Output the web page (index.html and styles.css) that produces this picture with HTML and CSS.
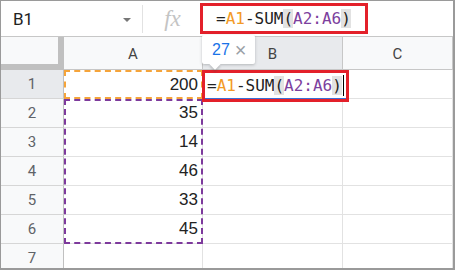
FILE: index.html
```html
<!DOCTYPE html>
<html lang="en">
<head>
  <meta charset="UTF-8">
  <meta name="viewport" content="width=device-width, initial-scale=1.0">
  <title>Sheet formula</title>
  <link rel="stylesheet" href="styles.css">
</head>
<body>
  <div class="sheet">
    <!-- Formula bar -->
    <div class="formula-bar">
      <div class="namebox">
        <span>B1</span>
        <span class="dropdown"></span>
      </div>
      <div class="sep"></div>
      <div class="fx">fx</div>
      <div class="formula-box">
        <span class="eq">=</span><span class="r1">A1</span><span class="fn">-SUM</span><span class="paren">(</span><span class="r2">A2:A6</span><span class="paren">)</span>
      </div>
    </div>

    <!-- Grid -->
    <div class="grid">
      <div class="corner"></div>
      <div class="col-head">A</div>
      <div class="col-head active">B</div>
      <div class="col-head">C</div>

      <div class="row-head active">1</div>
      <div class="cell ref-orange">200</div>
      <div class="cell anchor">
        <!-- Result preview tooltip -->
        <div class="preview">
          <span class="preview-value">27</span>
          <span class="preview-close">&times;</span>
        </div>
        <!-- Cell editor in B1 -->
        <div class="editor">
          <div class="editor-inner">
            <span class="eq">=</span><span class="r1">A1</span><span class="fn">-SUM</span><span class="paren">(</span><span class="r2">A2:A6</span><span class="paren">)</span><span class="caret"></span>
          </div>
        </div>
      </div>
      <div class="cell"></div>

      <div class="row-head">2</div>
      <div class="cell anchor">35<div class="ref-purple"></div></div>
      <div class="cell"></div>
      <div class="cell"></div>

      <div class="row-head">3</div>
      <div class="cell">14</div>
      <div class="cell"></div>
      <div class="cell"></div>

      <div class="row-head">4</div>
      <div class="cell">46</div>
      <div class="cell"></div>
      <div class="cell"></div>

      <div class="row-head">5</div>
      <div class="cell">33</div>
      <div class="cell"></div>
      <div class="cell"></div>

      <div class="row-head">6</div>
      <div class="cell">45</div>
      <div class="cell"></div>
      <div class="cell"></div>

      <div class="row-head">7</div>
      <div class="cell"></div>
      <div class="cell"></div>
      <div class="cell"></div>
    </div>
  </div>
</body>
</html>
```

FILE: styles.css
```css
/* Page */
body {
  margin: 0;
  font-family: Roboto, "Liberation Sans", Arial, sans-serif;
  background: #fff;
}

.sheet {
  width: 455px;
  height: 270px;
  box-sizing: border-box;
  border: 1px solid #9a9a9a;
  border-right-width: 2px;
  border-bottom-width: 2px;
  overflow: hidden;
}

/* Formula bar */
.formula-bar {
  height: 36px;
  box-sizing: border-box;
  border-bottom: 1px solid #c7c7c7;
  display: flex;
  align-items: center;
}

.namebox {
  flex: 0 0 141px;
  box-sizing: border-box;
  padding: 0 11px 0 12px;
  display: flex;
  align-items: center;
  justify-content: space-between;
  font-size: 17px;
  color: #222;
}

.dropdown {
  width: 0;
  height: 0;
  border-left: 4px solid transparent;
  border-right: 4px solid transparent;
  border-top: 4px solid #777;
  margin-top: 2px;
}

.sep {
  width: 1px;
  height: 28px;
  background: #e2e2e2;
}

.fx {
  flex: 0 0 57px;
  text-align: center;
  font-family: "Liberation Serif", serif;
  font-style: italic;
  font-size: 23px;
  color: #c4c4c4;
  padding-left: 2px;
  box-sizing: border-box;
}

.formula-box {
  width: 168px;
  height: 31px;
  box-sizing: border-box;
  border: 3px solid #e3202a;
  padding-left: 13px;
  display: flex;
  align-items: center;
  font-family: "DejaVu Sans Mono", "Liberation Mono", monospace;
  font-size: 16px;
  margin-top: -1px;
}

/* Formula tokens */
.eq,
.fn {
  color: #222;
}

.r1 {
  color: #f39a26;
}

.r2 {
  color: #7d3f9e;
}

.paren {
  color: #222;
  background: #e2e2e2;
}

/* Grid */
.grid {
  display: grid;
  grid-template-columns: 63px 139px 140px 1fr;
  grid-template-rows: 33px repeat(7, 29px);
}

.corner {
  background: #f8f9fa;
  border-right: 6px solid #c0c0c0;
  border-bottom: 6px solid #c0c0c0;
}

.col-head {
  background: #f8f9fa;
  border-right: 1px solid #c7c7c7;
  border-bottom: 1px solid #c7c7c7;
  display: flex;
  align-items: center;
  justify-content: center;
  padding-top: 2px;
  font-size: 15px;
  color: #444;
}

.row-head {
  background: #f8f9fa;
  border-right: 1px solid #c0c0c0;
  border-bottom: 1px solid #d6d6d6;
  display: flex;
  align-items: center;
  justify-content: center;
  font-size: 15px;
  color: #5f6368;
}

.col-head.active,
.row-head.active {
  background: #e8eaed;
}

.cell {
  border-right: 1px solid #e2e2e2;
  border-bottom: 1px solid #e2e2e2;
  display: flex;
  align-items: center;
  justify-content: flex-end;
  padding-right: 4px;
  font-family: "Liberation Sans", Arial, sans-serif;
  font-size: 17px;
  color: #222;
}

.cell.anchor {
  position: relative;
}

.cell.ref-orange {
  border: 2px dashed #f5a43a;
  padding-right: 3px;
}

/* Range highlight A2:A6, drawn over five rows */
.ref-purple {
  position: absolute;
  left: 0;
  top: 0;
  width: 139px;
  height: 145px;
  box-sizing: border-box;
  border: 2px dashed #7d3a9c;
  pointer-events: none;
  z-index: 1;
}

/* Cell editor */
.editor {
  position: absolute;
  left: -1px;
  top: 0;
  width: 147px;
  height: 32px;
  box-sizing: border-box;
  border: 3px solid #e3202a;
  background: #fff;
  z-index: 2;
  display: flex;
}

.editor-inner {
  flex: 1;
  display: flex;
  align-items: center;
  padding-left: 2px;
  border-bottom: 1px solid #3b6fd6;
  font-family: "DejaVu Sans Mono", "Liberation Mono", monospace;
  font-size: 16px;
}

.caret {
  width: 1px;
  height: 21px;
  background: #000;
  margin-left: 1px;
}

/* Preview tooltip */
.preview {
  position: absolute;
  top: -35px;
  left: -1px;
  width: 53px;
  height: 29px;
  box-sizing: border-box;
  background: #fff;
  border-radius: 2px;
  box-shadow: 0 1px 3px rgba(60, 64, 67, 0.3);
  display: flex;
  align-items: center;
  padding-left: 10px;
  gap: 5px;
  z-index: 3;
}

.preview::after {
  content: "";
  position: absolute;
  left: 9px;
  bottom: -4px;
  width: 8px;
  height: 8px;
  background: #fff;
  transform: rotate(45deg);
  box-shadow: 2px 2px 2px rgba(60, 64, 67, 0.2);
}

.preview-value {
  font-size: 16px;
  color: #1a73e8;
}

.preview-close {
  font-size: 20px;
  color: #9aa0a6;
  line-height: 1;
}
```
